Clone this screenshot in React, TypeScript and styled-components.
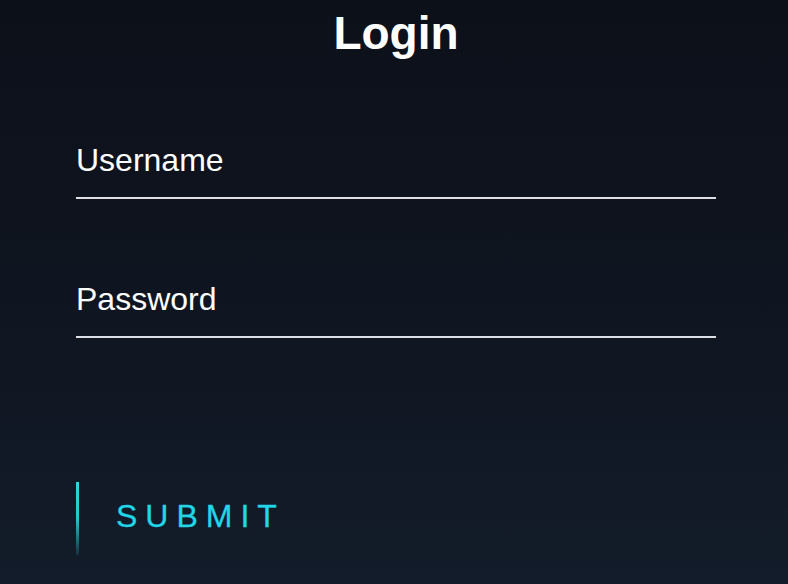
import { type FC } from 'react';
import styled, { createGlobalStyle } from 'styled-components';

const GlobalStyle = createGlobalStyle`
  html, body {
    margin: 0;
    padding: 0;
    height: 100%;
  }
  body {
    background: linear-gradient(180deg, #0c1019 0%, #0f1520 50%, #131c2a 100%);
    font-family: "Liberation Sans", Arial, sans-serif;
    overflow: hidden;
  }
  #root {
    min-height: 100%;
  }
`;

const Page = styled.div`
  min-height: 584px;
  display: flex;
  flex-direction: column;
`;

const LoginBox = styled.div`
  width: 640px;
  margin-left: 76px;
  padding-top: 7px;
  display: flex;
  flex-direction: column;
`;

const Title = styled.h2`
  margin: 0 0 60px;
  color: #fff;
  font-size: 46px;
  font-weight: 700;
  text-align: center;
  line-height: 53px;
`;

const Form = styled.form`
  display: flex;
  flex-direction: column;
  margin: 0;
`;

const UserBox = styled.div`
  position: relative;
  margin-bottom: 60px;
`;

const Input = styled.input`
  display: block;
  box-sizing: border-box;
  width: 100%;
  padding: 20px 0;
  font-family: inherit;
  font-size: 32px;
  line-height: 37px;
  height: 79px;
  color: #fff;
  background: transparent;
  border: none;
  border-bottom: 2px solid #dcdfe3;
  outline: none;
`;

// floats over the input like a placeholder
const Label = styled.label`
  position: absolute;
  top: 0;
  left: 0;
  padding: 22px 0;
  font-size: 32px;
  line-height: 37px;
  color: #fff;
  pointer-events: none;
`;

const SubmitRow = styled.div`
  margin-top: 80px;
  display: flex;
`;

const SubmitLink = styled.a`
  position: relative;
  display: inline-block;
  padding: 20px 40px;
  color: #20d6e8;
  font-size: 32px;
  line-height: 37px;
  letter-spacing: 8px;
  text-transform: uppercase;
  text-decoration: none;
  overflow: hidden;
  -webkit-text-stroke: 0.3px #20d6e8;

  &::before {
    content: '';
    position: absolute;
    left: 0;
    top: 4px;
    bottom: 0;
    width: 3px;
    background: linear-gradient(180deg, #2fd6e2 0%, #27c4cf 50%, rgba(31, 160, 170, 0.15) 100%);
  }
`;

const fields = ['Username', 'Password'];

const App: FC = () => {
  return (
    <Page>
      <GlobalStyle />
      <LoginBox>
        <Title>Login</Title>
        <Form onSubmit={(e) => e.preventDefault()}>
          {fields.map((f) => (
            <UserBox key={f}>
              <Input type={f === 'Password' ? 'password' : 'text'} required />
              <Label>{f}</Label>
            </UserBox>
          ))}
          <SubmitRow>
            <SubmitLink href="#">Submit</SubmitLink>
          </SubmitRow>
        </Form>
      </LoginBox>
    </Page>
  );
};

export default App;
